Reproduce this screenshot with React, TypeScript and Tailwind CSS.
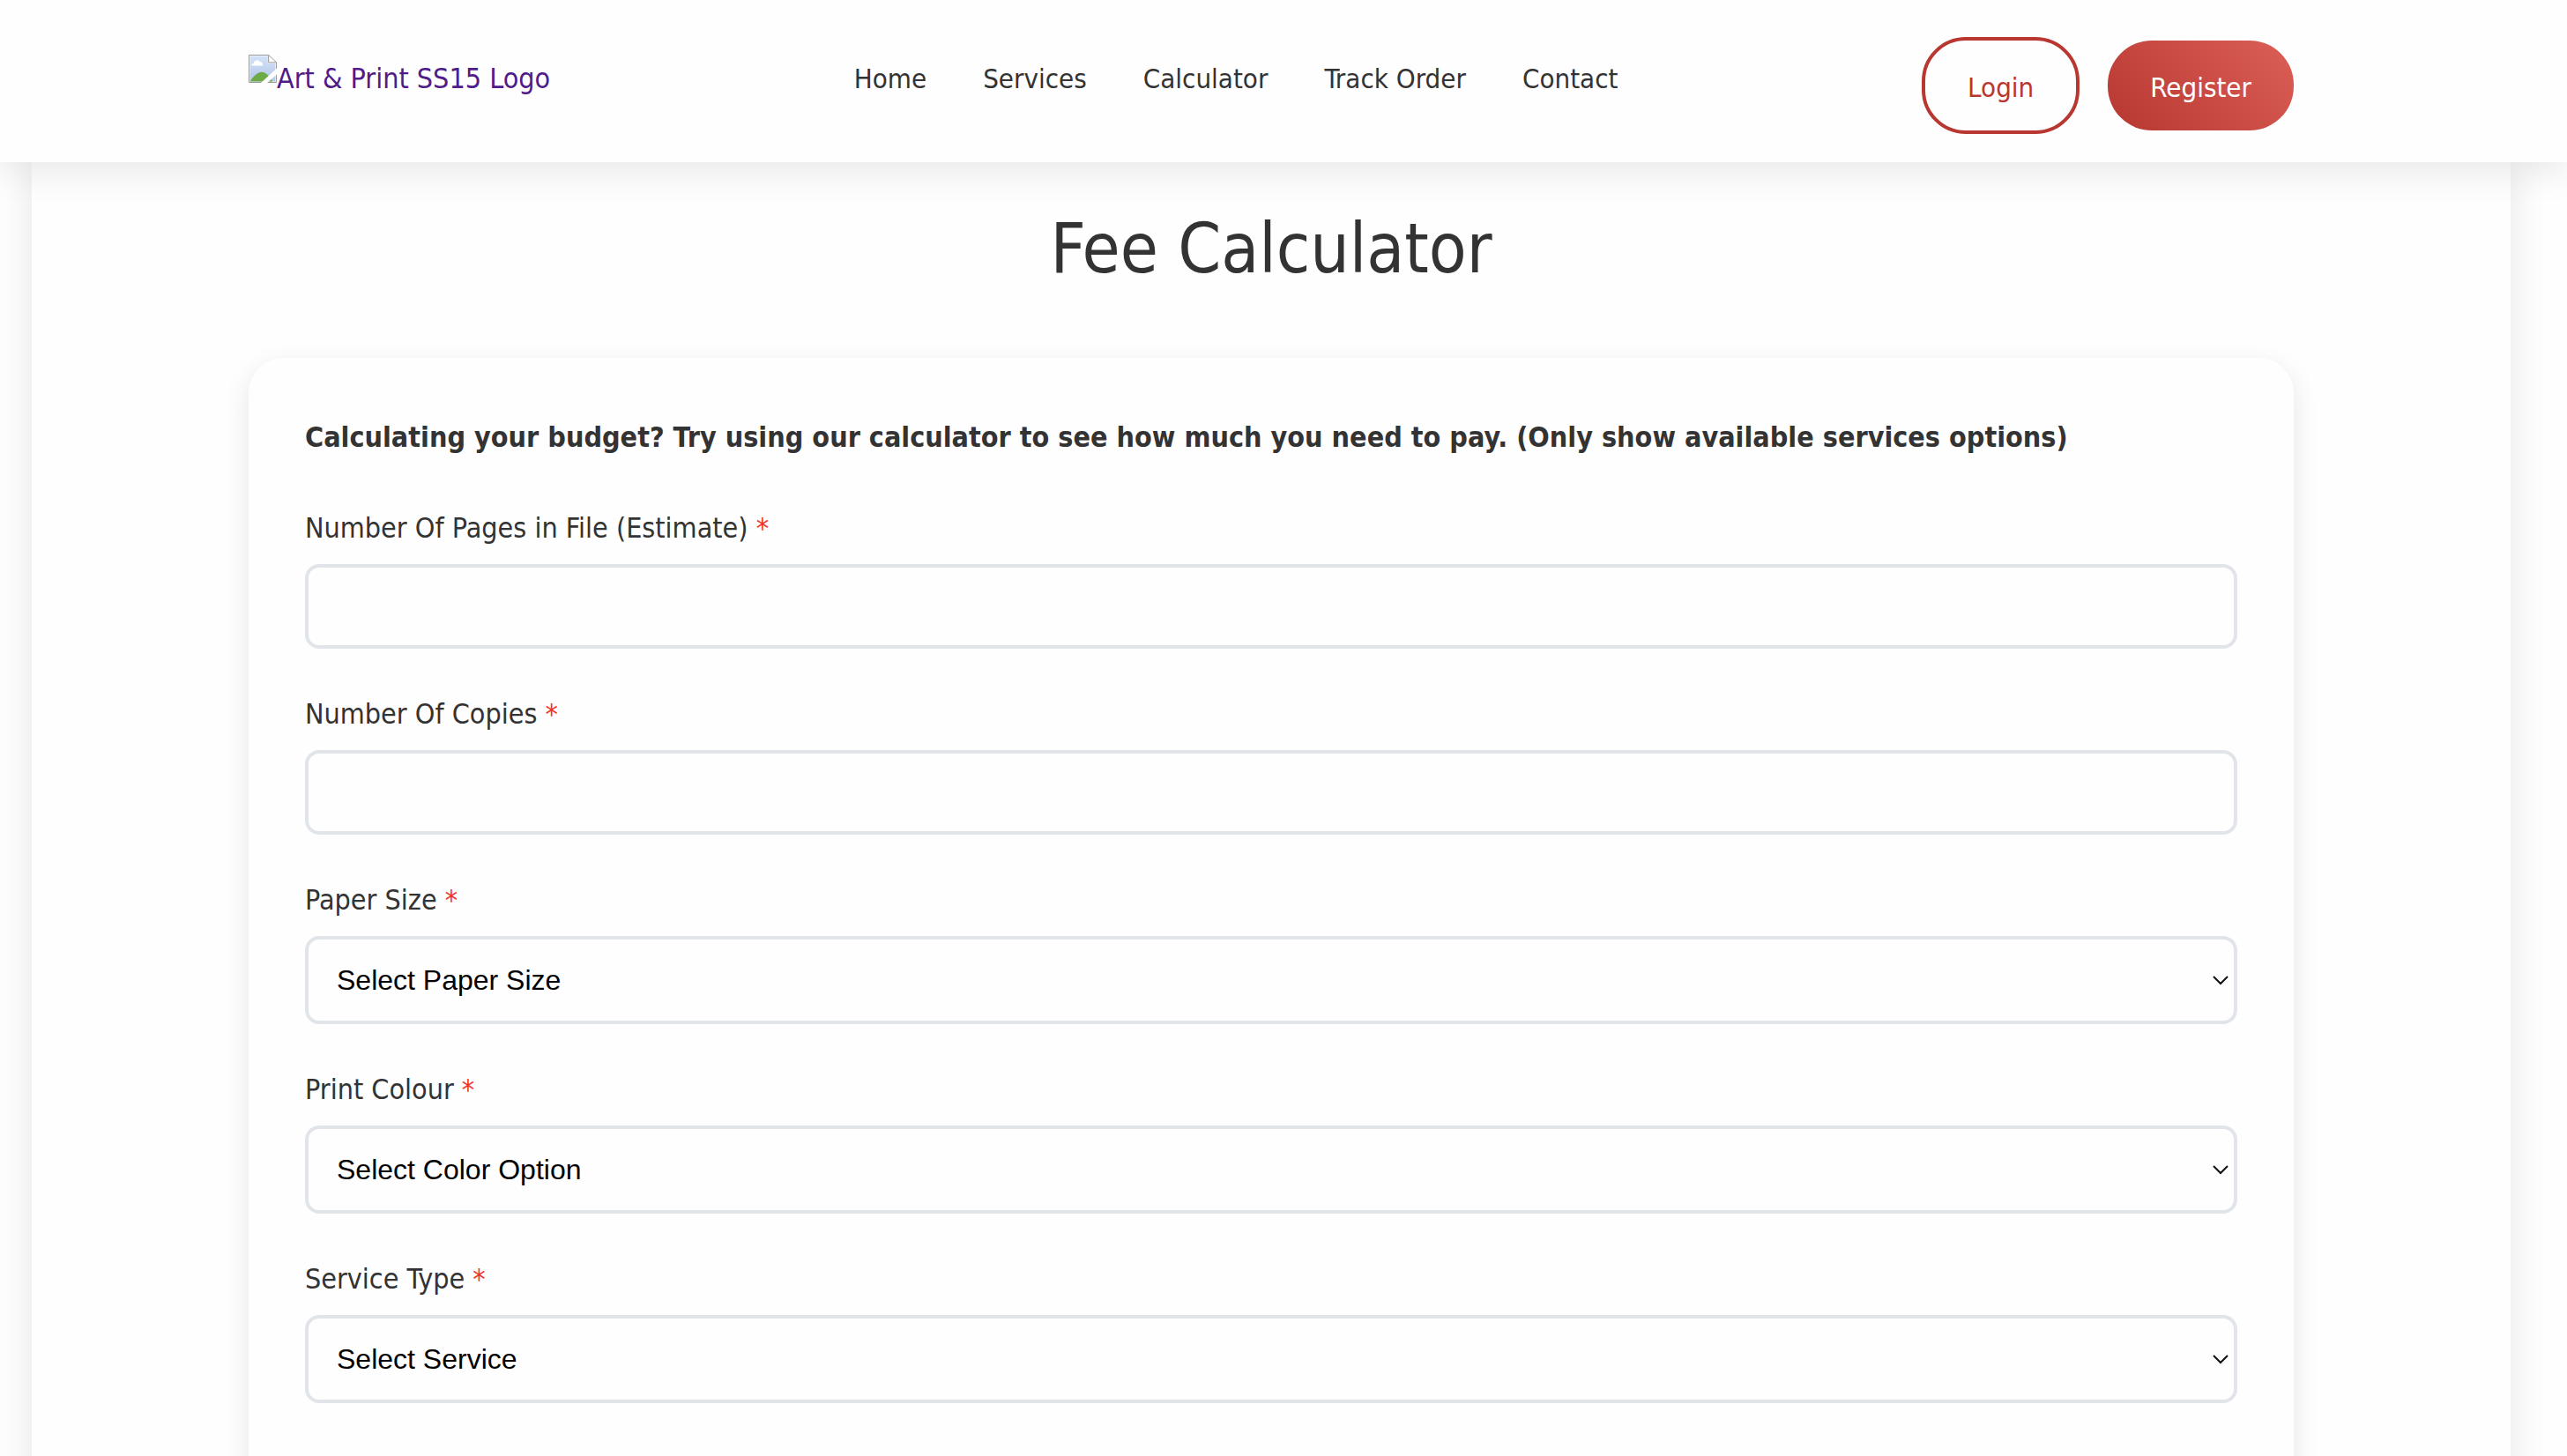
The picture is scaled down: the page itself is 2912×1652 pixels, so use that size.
import type { ReactNode } from "react";

const NAV_LINKS = ["Home", "Services", "Calculator", "Track Order", "Contact"];

function BrokenImageIcon() {
  return (
    <svg viewBox="0 0 16 16" className="size-8 shrink-0" aria-hidden="true">
      <defs>
        <linearGradient id="sky" x1="0" y1="0" x2="0" y2="1">
          <stop offset="0" stopColor="#d3e2f8" />
          <stop offset="1" stopColor="#b3c6e8" />
        </linearGradient>
      </defs>
      <path d="M.25.25H11.4L15.75 4.4V15.75H.25Z" fill="#fff" stroke="#9a9a9a" strokeWidth=".5" />
      <path d="M.8.8H10.9V4.9H15.2V15.2H.8Z" fill="url(#sky)" />
      <path d="M1.6 6.3A1.2 1.2 0 0 1 2.8 5 2 2 0 0 1 6.5 4.1 1.4 1.4 0 0 1 8 5.6V6.3Z" fill="#fff" />
      <path d="M.8 15.2C3 12 5 9.9 7.4 9.9S11.6 12 13.6 15.2Z" fill="#6dab49" />
      <path d="M11.3.4V4.4H15.7" fill="none" stroke="#9a9a9a" strokeWidth=".5" />
      <path d="M16 7.8V11.2L10.6 16H7Z" fill="#fefefe" />
    </svg>
  );
}

function Field({ id, label, children }: { id: string; label: string; children: ReactNode }) {
  return (
    <div className="flex flex-col">
      <label htmlFor={id} className="mb-4 leading-[50px]">
        {label} <span className="text-[#f0342a]">*</span>
      </label>
      {children}
    </div>
  );
}

function NumberField({ id, label }: { id: string; label: string }) {
  return (
    <Field id={id} label={label}>
      <input
        id={id}
        type="text"
        inputMode="numeric"
        required
        className="h-24 w-full rounded-2xl border-4 border-[#e1e5ea] bg-[#fefefe] px-8 font-['Liberation_Sans',sans-serif] text-black shadow-none"
      />
    </Field>
  );
}

function SelectField({ id, label, placeholder }: { id: string; label: string; placeholder: string }) {
  return (
    <Field id={id} label={label}>
      <div className="relative">
        <select
          id={id}
          required
          className="h-[100px] w-full appearance-none rounded-2xl border-4 border-[#e1e5ea] bg-[#fefefe] px-8 font-['Liberation_Sans',sans-serif] text-black"
        >
          <option>{placeholder}</option>
        </select>
        <svg
          viewBox="0 0 18 12"
          className="pointer-events-none absolute inset-y-0 right-2.5 my-auto h-3 w-[18px]"
          fill="none"
          stroke="#111"
          strokeWidth="2"
          aria-hidden="true"
        >
          <path d="M1 2L9 10L17 2" />
        </svg>
      </div>
    </Field>
  );
}

export default function App() {
  return (
    <div className="flex h-screen flex-col overflow-hidden bg-[#fefefe] font-['DejaVu_Sans_Condensed','DejaVu_Sans',sans-serif] text-[32px] text-[#333]">
      <header className="relative z-10 shrink-0 bg-[#fefefe] pt-[42px] pr-[68px] pb-8 pl-10 text-[31px] shadow-[0_8px_40px_rgba(0,0,0,0.1)]">
        <div className="mx-auto flex max-w-[2320px] items-start justify-between">
          <a href="#home" className="mt-5 flex text-[32px] leading-[54px] text-[#4f1c8a]">
            <BrokenImageIcon />
            Art &amp; Print SS15 Logo
          </a>
          <nav className="mt-5 flex gap-16 leading-[54px]">
            {NAV_LINKS.map((link) => (
              <a key={link} href="#top">
                {link}
              </a>
            ))}
          </nav>
          <div className="flex items-center gap-8 leading-[50px]">
            <button className="rounded-[50px] border-4 border-[#b83831] px-12 pt-7 pb-6 text-[#b83831]">
              Login
            </button>
            <button className="rounded-[50px] bg-[linear-gradient(45deg,#b6372f,#dc5f58)] px-12 pt-7 pb-6 text-white">
              Register
            </button>
          </div>
        </div>
      </header>

      <main className="mr-16 ml-9 grow bg-[#fefefe] px-10 pt-[50px] shadow-[0_0_40px_rgba(0,0,0,0.1)]">
        <h1 className="mb-[76px] text-center text-[78px] leading-[96px]">Fee Calculator</h1>
        <form className="mx-auto flex max-w-[2320px] flex-col gap-[49px] rounded-[40px] bg-[#fefefe] p-16 shadow-[0_10px_30px_rgba(0,0,0,0.1)]">
          <h2 className="pb-[3px] leading-[52px] font-bold">
            Calculating your budget? Try using our calculator to see how much you need to pay. (Only
            show available services options)
          </h2>
          <NumberField id="pages" label="Number Of Pages in File (Estimate)" />
          <NumberField id="copies" label="Number Of Copies" />
          <SelectField id="paper-size" label="Paper Size" placeholder="Select Paper Size" />
          <SelectField id="print-colour" label="Print Colour" placeholder="Select Color Option" />
          <SelectField id="service-type" label="Service Type" placeholder="Select Service" />
          <SelectField id="staple" label="Staple" placeholder="Select Option" />
        </form>
      </main>
    </div>
  );
}
